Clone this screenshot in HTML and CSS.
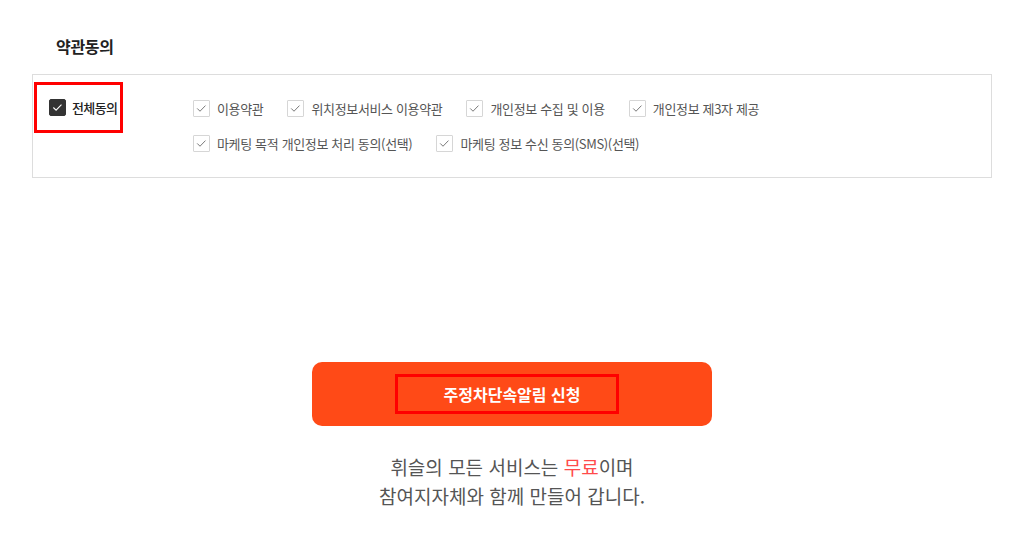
FILE: index.html
```html
<!DOCTYPE html>
<html lang="ko">
<head>
<meta charset="utf-8">
<link rel="stylesheet" href="styles.css">
</head>
<body>
<div class="page">
  <h2 class="title">약관동의</h2>
  <div class="terms">
    <label class="all">
      <span class="cb cb-dark"><svg viewBox="0 0 17 17"><path d="M3.8 8.5 L6.9 11.5 L13 5.3" /></svg></span>
      <span class="all-text">전체동의</span>
    </label>
    <div class="options">
      <div class="row">
        <label class="opt"><span class="cb"><svg viewBox="0 0 17 17"><path d="M3.6 8.4 L6.8 11.6 L13 5.2" /></svg></span>이용약관</label>
        <label class="opt"><span class="cb"><svg viewBox="0 0 17 17"><path d="M3.6 8.4 L6.8 11.6 L13 5.2" /></svg></span>위치정보서비스 이용약관</label>
        <label class="opt"><span class="cb"><svg viewBox="0 0 17 17"><path d="M3.6 8.4 L6.8 11.6 L13 5.2" /></svg></span>개인정보 수집 및 이용</label>
        <label class="opt"><span class="cb"><svg viewBox="0 0 17 17"><path d="M3.6 8.4 L6.8 11.6 L13 5.2" /></svg></span>개인정보 제3자 제공</label>
      </div>
      <div class="row">
        <label class="opt"><span class="cb"><svg viewBox="0 0 17 17"><path d="M3.6 8.4 L6.8 11.6 L13 5.2" /></svg></span>마케팅 목적 개인정보 처리 동의(선택)</label>
        <label class="opt"><span class="cb"><svg viewBox="0 0 17 17"><path d="M3.6 8.4 L6.8 11.6 L13 5.2" /></svg></span>마케팅 정보 수신 동의(SMS)(선택)</label>
      </div>
    </div>
  </div>
  <div class="actions">
    <button class="submit"><span class="submit-text">주정차단속알림 신청</span></button>
    <p class="notice">휘슬의 모든 서비스는 <em class="free">무료</em>이며<br>참여지자체와 함께 만들어 갑니다.</p>
  </div>
</div>
</body>
</html>
```

FILE: styles.css
```css
* { box-sizing: border-box; }
html, body { margin: 0; padding: 0; background: #fff; }
body {
  font-family: "Noto Sans CJK KR", "Noto Sans", sans-serif;
  color: #333;
}
.page {
  width: 960px;
  margin-left: 32px;
  padding-top: 36px;
}
.title {
  margin: 0 0 18px 24px;
  font-size: 16px;
  line-height: 20px;
  font-weight: 700;
  color: #222;
  letter-spacing: -0.3px;
}
.terms {
  border: 1px solid #dddddd;
  height: 104px;
  display: flex;
  align-items: flex-start;
  padding: 7px 0 0 1px;
}
.all {
  display: flex;
  align-items: flex-start;
  gap: 6px;
  border: 3px solid #ff0000;
  padding: 14px 3px 15px 12px;
  height: 51px;
  width: 89px;
}
.all-text {
  font-size: 13px;
  line-height: 17px;
  font-weight: 500;
  color: #222;
  letter-spacing: -0.6px;
  white-space: nowrap;
}
.cb {
  width: 17px;
  height: 17px;
  flex: none;
  border: 1px solid #d6d6d6;
  border-radius: 1px;
  background: #fff;
  display: flex;
}
.cb svg { width: 100%; height: 100%; display: block; }
.cb path { fill: none; stroke: #666; stroke-width: 1; }
.cb-dark { background: #333; border-color: #333; border-radius: 2px; }
.cb-dark path { stroke: #fff; stroke-width: 1.2; }
.options {
  margin-left: 70px;
  padding-top: 18px;
  display: flex;
  flex-direction: column;
  gap: 18px;
}
.row {
  display: flex;
  gap: 24px;
}
.opt {
  display: flex;
  align-items: center;
  gap: 7px;
  font-size: 13px;
  line-height: 17px;
  color: #555;
  white-space: nowrap;
  letter-spacing: -0.35px;
}
.actions {
  display: flex;
  flex-direction: column;
  align-items: center;
  padding-top: 184px;
}
.submit {
  width: 400px;
  height: 64px;
  border: none;
  border-radius: 10px;
  background: #ff4a17;
  display: flex;
  align-items: center;
  justify-content: center;
  font-family: inherit;
  padding: 0;
  cursor: pointer;
}
.submit-text {
  display: block;
  width: 224px;
  height: 40px;
  border: 3px solid #ff0000;
  color: #fff;
  font-size: 16px;
  font-weight: 700;
  line-height: 34px;
  text-align: center;
  margin-left: -10px;
  padding-left: 10px;
}
.notice {
  margin: 26px 0 0;
  font-size: 19px;
  line-height: 29px;
  color: #555;
  text-align: center;
}
.free {
  font-style: normal;
  color: #ff4b4b;
}
```
